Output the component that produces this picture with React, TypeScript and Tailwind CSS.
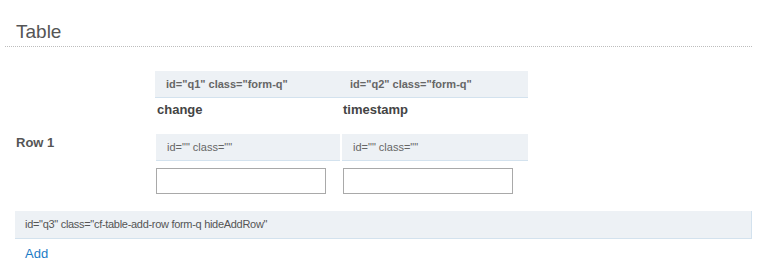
export default function App() {
  return (
    <div className="w-[757px] h-[276px] bg-white font-['Liberation_Sans',Arial,sans-serif] text-[#555]">
      {/* Section title */}
      <div className="mx-[5px] pl-[11px] pt-[20px] pb-[3px] border-b border-dotted border-[#bdbdbd]">
        <h2 className="text-[19px] leading-[23px] text-[#555]">Table</h2>
      </div>

      {/* Column headers */}
      <div className="pl-[155px] pt-[24px]">
        <div className="flex w-[373px] h-[27px] items-center bg-[#edf1f5] border-b border-[#d3e2ee] text-[11px] font-bold text-[#666]">
          <div className="w-[185px] pl-[11px]">id="q1" class="form-q"</div>
          <div className="pl-[10px]">id="q2" class="form-q"</div>
        </div>
        <div className="flex h-[22px] pt-[2px] items-center text-[13px] font-bold text-[#444]">
          <div className="w-[188px] pl-[2px]">change</div>
          <div>timestamp</div>
        </div>
      </div>

      {/* Row 1 */}
      <div className="flex pt-[14px]">
        <div className="w-[156px] pl-[16px] pt-[1px] text-[13px] font-bold leading-[16px] text-[#555]">Row 1</div>
        <div className="flex gap-[2px]">
          <div className="w-[184px]">
            <div className="h-[27px] flex items-center pl-[11px] bg-[#edf1f5] border-b border-[#d3e2ee] text-[11px] text-[#666]">id="" class=""</div>
            <input className="mt-[7px] w-[170px] h-[26px] border border-[#a9a9a9] bg-white" />
          </div>
          <div className="w-[186px]">
            <div className="h-[27px] flex items-center pl-[11px] bg-[#edf1f5] border-b border-[#d3e2ee] text-[11px] text-[#666]">id="" class=""</div>
            <input className="mt-[7px] ml-[1px] w-[170px] h-[26px] border border-[#a9a9a9] bg-white" />
          </div>
        </div>
      </div>

      {/* Add row */}
      <div className="ml-[15px] mt-[17px] w-[737px] h-[28px] flex items-center pl-[10px] bg-[#edf1f5] border-b border-r border-[#d3e2ee] text-[11px] tracking-[-0.3px] text-[#555]">
        id="q3" class="cf-table-add-row form-q hideAddRow"
      </div>
      <div className="pl-[25px] pt-[2px]">
        <a className="text-[13px] text-[#1a7bc6]">Add</a>
      </div>
    </div>
  );
}
